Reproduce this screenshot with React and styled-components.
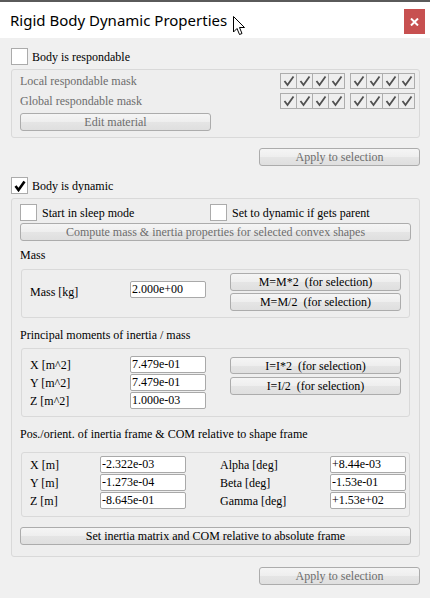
import React from "react";
import styled, { createGlobalStyle } from "styled-components";

const GlobalStyle = createGlobalStyle`
  html, body { margin: 0; padding: 0; background: #f0f0f0; }
  * { box-sizing: border-box; }
`;

const serif = `"Liberation Serif", "Times New Roman", serif`;

const Window = styled.div`
  position: relative;
  width: 430px;
  height: 598px;
  background: #f0f0f0;
  border-top: 2px solid #5a5a5a;
  overflow: hidden;
  font-family: ${serif};
  font-size: 12px;
  color: #000;
`;

const TitleBar = styled.div`
  height: 36px;
  background: #ffffff;
  display: flex;
  justify-content: space-between;
  padding: 0 5px 0 10px;
`;

const Title = styled.div`
  font-family: "Noto Sans", "Open Sans", sans-serif;
  font-size: 15px;
  line-height: 36px;
  color: #000;
`;

const CloseButton = styled.div`
  margin-top: 7px;
  width: 21px;
  height: 25px;
  background: #c75050;
  display: flex;
  align-items: center;
  justify-content: center;
`;

const Content = styled.div`
  display: flex;
  flex-direction: column;
  padding: 10px 10px 0 11px;
`;

const CheckRow = styled.div`
  display: flex;
  align-items: center;
  gap: ${(p) => p.$gap ?? 4}px;
  margin-top: ${(p) => p.$mt ?? 0}px;
  height: 17px;
  font-family: ${serif};
  font-size: 12px;
  color: ${(p) => (p.$disabled ? "#6d6d6d" : "#000")};
  line-height: 1;
`;

const Box = styled.span`
  width: 17px;
  height: 17px;
  flex: none;
  background: #fff;
  border: 1px solid #ababab;
  display: flex;
  align-items: center;
  justify-content: center;
`;

const Group = styled.div`
  margin-top: ${(p) => p.$mt ?? 0}px;
  margin-left: ${(p) => p.$ml ?? 0}px;
  padding: ${(p) => p.$pad};
  border: 1px solid #d9d9d9;
  border-radius: 3px;
  background: #eeeeee;
  display: flex;
  flex-direction: column;
`;

const MaskRow = styled.div`
  display: flex;
  align-items: center;
  justify-content: space-between;
  height: 16px;
  margin-top: ${(p) => p.$mt ?? 0}px;
  font-family: ${serif};
  font-size: 12px;
  color: #6d6d6d;
`;

const MaskSets = styled.div`
  display: flex;
  gap: 5px;
`;

const MaskSet = styled.div`
  display: flex;
  border-left: 1px solid #adadad;
`;

const MaskCell = styled.span`
  width: 16px;
  height: 16px;
  border: 1px solid #adadad;
  border-left: none;
  display: flex;
  align-items: center;
  justify-content: center;
`;

const Button = styled.button`
  width: ${(p) => p.$w}px;
  height: ${(p) => p.$h ?? 18}px;
  margin-top: ${(p) => p.$mt ?? 0}px;
  align-self: ${(p) => p.$align ?? "auto"};
  padding: 0;
  border: 1px solid #acacac;
  border-radius: 3px;
  background: linear-gradient(to bottom, #f5f5f5 0%, #eeeeee 50%, #e5e5e5 51%, #dfdfdf 100%);
  font-family: ${serif};
  font-size: 12px;
  line-height: 1;
  color: ${(p) => (p.$disabled ? "#6d6d6d" : "#000")};
  text-align: center;
  white-space: pre;
`;

const SectionLabel = styled.div`
  height: 14px;
  line-height: 14px;
  margin-top: ${(p) => p.$mt ?? 0}px;
  font-family: ${serif};
  font-size: 12px;
`;

const DynRow = styled.div`
  display: grid;
  grid-template-columns: 190px auto;
`;

const FieldGrid = styled.div`
  display: grid;
  grid-template-columns: ${(p) => p.$cols};
  grid-auto-rows: 17px;
  row-gap: 1px;
  align-items: center;
`;

const FieldLabel = styled.span`
  line-height: 1;
  font-family: ${serif};
  font-size: 12px;
`;

const Field = styled.input`
  width: 100%;
  height: 17px;
  padding: 0 1px;
  border: 1px solid #a9a9a9;
  border-radius: 2px;
  background: #fff;
  font-family: ${serif};
  font-size: 12px;
  color: #000;
  outline: none;
`;

const MassRow = styled.div`
  display: grid;
  grid-template-columns: 100px 76px 24px 171px;
  align-items: center;
`;

const ButtonStack = styled.div`
  display: flex;
  flex-direction: column;
  gap: ${(p) => p.$gap ?? 3}px;
  margin-top: ${(p) => p.$mt ?? 0}px;
  grid-column: 4;
  grid-row: ${(p) => p.$rows ?? "auto"};
  align-self: start;
`;

const Cursor = styled.svg`
  position: absolute;
  left: 233px;
  top: 14px;
`;

const Check = ({ color = "#505050", w = 1.8 }) => (
  <svg width="12" height="12" viewBox="0 0 12 12">
    <path d="M1.5 6 L4.5 10 L10.5 1.5" fill="none" stroke={color} strokeWidth={w} strokeLinejoin="miter" />
  </svg>
);

const Mask = () => (
  <MaskSets>
    {[0, 1].map((s) => (
      <MaskSet key={s}>
        {[0, 1, 2, 3].map((c) => (
          <MaskCell key={c}>
            <Check />
          </MaskCell>
        ))}
      </MaskSet>
    ))}
  </MaskSets>
);

export default function App() {
  return (
    <>
      <GlobalStyle />
      <Window>
        <TitleBar>
          <Title>Rigid Body Dynamic Properties</Title>
          <CloseButton>
            <svg width="9" height="8" viewBox="0 0 9 8">
              <path d="M1 0.5 L8 7.5 M8 0.5 L1 7.5" stroke="#fff" strokeWidth="2" />
            </svg>
          </CloseButton>
        </TitleBar>
        <Content>
          <CheckRow>
            <Box />
            Body is respondable
          </CheckRow>
          <Group $mt={4} $pad="3px 4px 6px 8px">
            <MaskRow>
              Local respondable mask
              <Mask />
            </MaskRow>
            <MaskRow $mt={4}>
              Global respondable mask
              <Mask />
            </MaskRow>
            <Button $w={191} $mt={4} $disabled>
              Edit material
            </Button>
          </Group>
          <Button $w={161} $mt={10} $align="flex-end" $disabled>
            Apply to selection
          </Button>
          <CheckRow $mt={11}>
            <Box>
              <Check color="#000" w={2.6} />
            </Box>
            Body is dynamic
          </CheckRow>
          <Group $mt={4} $pad="5px 9px 11px 8px">
            <DynRow>
              <CheckRow $gap={5}>
                <Box />
                Start in sleep mode
              </CheckRow>
              <CheckRow $gap={5}>
                <Box />
                Set to dynamic if gets parent
              </CheckRow>
            </DynRow>
            <Button $w={391} $mt={2} $disabled>
              Compute mass &amp; inertia properties for selected convex shapes
            </Button>
            <SectionLabel $mt={7}>Mass</SectionLabel>
            <Group $mt={7} $ml={1} $pad="3px 8px 6px 8px">
              <MassRow>
                <FieldLabel>Mass [kg]</FieldLabel>
                <Field readOnly value="2.000e+00" style={{ marginTop: -6 }} />
                <span />
                <ButtonStack $gap={2}>
                  <Button $w={171}>{"M=M*2  (for selection)"}</Button>
                  <Button $w={171}>{"M=M/2  (for selection)"}</Button>
                </ButtonStack>
              </MassRow>
            </Group>
            <SectionLabel $mt={10}>Principal moments of inertia / mass</SectionLabel>
            <Group $mt={6} $ml={1} $pad="7px 8px 7px 8px">
              <FieldGrid $cols="100px 76px 24px 171px">
                <FieldLabel>X [m^2]</FieldLabel>
                <Field readOnly value="7.479e-01" />
                <span />
                <ButtonStack $mt={1} $rows="1 / span 3">
                  <Button $w={171} $h={17}>{"I=I*2  (for selection)"}</Button>
                  <Button $w={171}>{"I=I/2  (for selection)"}</Button>
                </ButtonStack>
                <FieldLabel>Y [m^2]</FieldLabel>
                <Field readOnly value="7.479e-01" />
                <span />
                <FieldLabel>Z [m^2]</FieldLabel>
                <Field readOnly value="1.000e-03" />
                <span />
              </FieldGrid>
            </Group>
            <SectionLabel $mt={10}>Pos./orient. of inertia frame &amp; COM relative to shape frame</SectionLabel>
            <Group $mt={11} $ml={1} $pad="3px 8px 7px 8px">
              <FieldGrid $cols="70px 86px 34px 110px 76px">
                <FieldLabel>X [m]</FieldLabel>
                <Field readOnly value="-2.322e-03" />
                <span />
                <FieldLabel>Alpha [deg]</FieldLabel>
                <Field readOnly value="+8.44e-03" />
                <FieldLabel>Y [m]</FieldLabel>
                <Field readOnly value="-1.273e-04" />
                <span />
                <FieldLabel>Beta [deg]</FieldLabel>
                <Field readOnly value="-1.53e-01" />
                <FieldLabel>Z [m]</FieldLabel>
                <Field readOnly value="-8.645e-01" />
                <span />
                <FieldLabel>Gamma [deg]</FieldLabel>
                <Field readOnly value="+1.53e+02" />
              </FieldGrid>
            </Group>
            <Button $w={391} $mt={10}>
              Set inertia matrix and COM relative to absolute frame
            </Button>
          </Group>
          <Button $w={161} $mt={10} $align="flex-end" $disabled>
            Apply to selection
          </Button>
        </Content>
        <Cursor width="13" height="20" viewBox="0 0 13 20">
          <path d="M0.5 0.5 L0.5 16 L4 12.5 L6.5 18.5 L9 17.5 L6.5 11.5 L11.5 11.5 Z" fill="#fff" stroke="#000" strokeWidth="1" strokeLinejoin="round" />
        </Cursor>
      </Window>
    </>
  );
}
